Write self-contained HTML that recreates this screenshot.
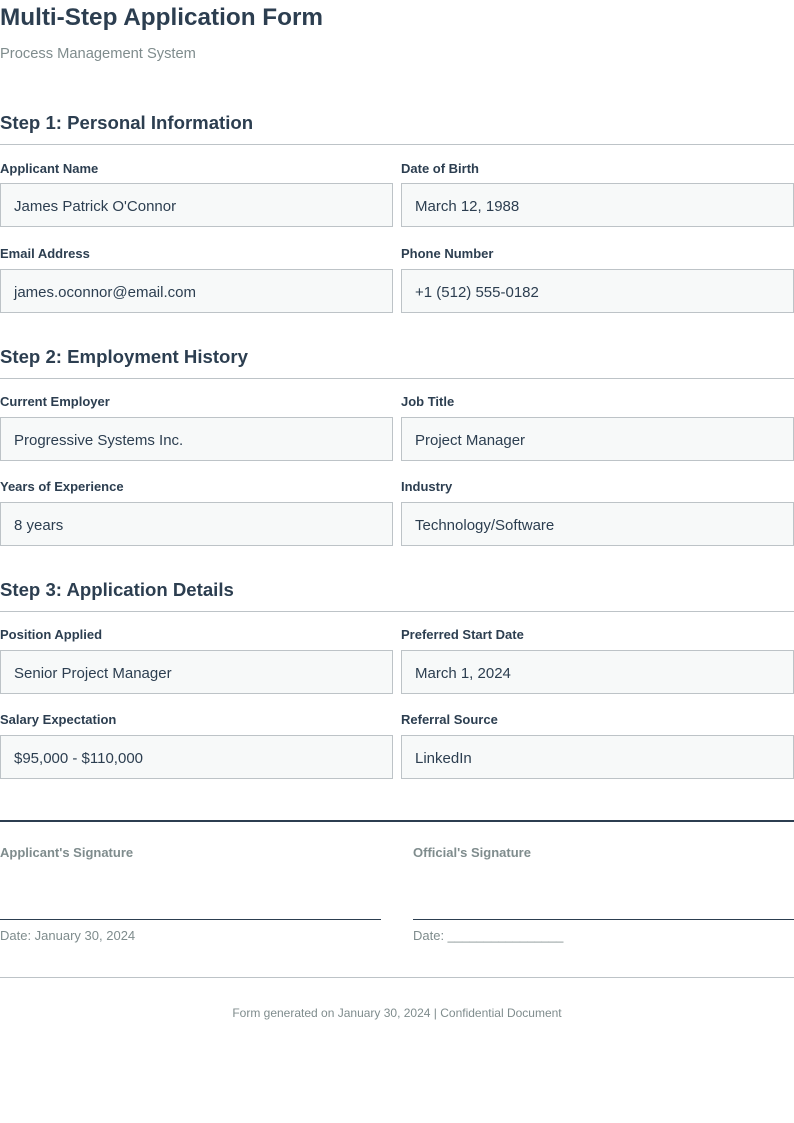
<!DOCTYPE html>
<html><head><meta charset="utf-8"><style>
*{margin:0;padding:0;box-sizing:border-box}
body{width:794px;height:1123px;background:#fff;font-family:"Liberation Sans",Arial,sans-serif;color:#2c3e50;position:relative;overflow:hidden}
.a{position:absolute;white-space:nowrap}
h1{font-size:24.3px;font-weight:bold;line-height:1}
.sub{font-size:14.7px;color:#7f8c8d}
h2{font-size:18.6px;font-weight:bold;line-height:1}
.hr{position:absolute;left:0;width:794px;height:1px;background:#bdc3c7}
.lb{font-size:13px;font-weight:bold;line-height:1}
.box{position:absolute;width:393px;height:44px;background:#f7f9f9;border:1px solid #bdc3c7;font-size:15px;padding-left:13px;line-height:45px}
.g{color:#7f8c8d}
</style></head><body>
<h1 class="a" style="left:0;top:6px">Multi-Step Application Form</h1>
<div class="a sub" style="left:0;top:46px">Process Management System</div>

<h2 class="a" style="left:0;top:114px">Step 1: Personal Information</h2>
<div class="hr" style="top:144px"></div>
<div class="a lb" style="left:0;top:162px">Applicant Name</div>
<div class="a lb" style="left:401px;top:162px">Date of Birth</div>
<div class="box" style="left:0;top:183px">James Patrick O'Connor</div>
<div class="box" style="left:401px;top:183px">March 12, 1988</div>
<div class="a lb" style="left:0;top:247px">Email Address</div>
<div class="a lb" style="left:401px;top:247px">Phone Number</div>
<div class="box" style="left:0;top:269px">james.oconnor@email.com</div>
<div class="box" style="left:401px;top:269px">+1 (512) 555-0182</div>

<h2 class="a" style="left:0;top:348px">Step 2: Employment History</h2>
<div class="hr" style="top:378px"></div>
<div class="a lb" style="left:0;top:395px">Current Employer</div>
<div class="a lb" style="left:401px;top:395px">Job Title</div>
<div class="box" style="left:0;top:417px">Progressive Systems Inc.</div>
<div class="box" style="left:401px;top:417px">Project Manager</div>
<div class="a lb" style="left:0;top:480px">Years of Experience</div>
<div class="a lb" style="left:401px;top:480px">Industry</div>
<div class="box" style="left:0;top:502px">8 years</div>
<div class="box" style="left:401px;top:502px">Technology/Software</div>

<h2 class="a" style="left:0;top:581px">Step 3: Application Details</h2>
<div class="hr" style="top:611px"></div>
<div class="a lb" style="left:0;top:628px">Position Applied</div>
<div class="a lb" style="left:401px;top:628px">Preferred Start Date</div>
<div class="box" style="left:0;top:650px">Senior Project Manager</div>
<div class="box" style="left:401px;top:650px">March 1, 2024</div>
<div class="a lb" style="left:0;top:713px">Salary Expectation</div>
<div class="a lb" style="left:401px;top:713px">Referral Source</div>
<div class="box" style="left:0;top:735px">$95,000 - $110,000</div>
<div class="box" style="left:401px;top:735px">LinkedIn</div>

<div class="hr" style="top:820px;height:2px;background:#2c3e50"></div>
<div class="a lb g" style="left:0;top:846px">Applicant's Signature</div>
<div class="a lb g" style="left:413px;top:846px">Official's Signature</div>
<div class="a" style="left:0;top:919px;width:381px;height:1px;background:#2c3e50"></div>
<div class="a" style="left:413px;top:919px;width:381px;height:1px;background:#2c3e50"></div>
<div class="a g" style="left:0;top:928px;font-size:13px">Date: January 30, 2024</div>
<div class="a g" style="left:413px;top:928px;font-size:13px">Date: ________________</div>
<div class="hr" style="top:977px"></div>
<div class="a g" style="left:0;width:794px;text-align:center;top:1006px;font-size:12px">Form generated on January 30, 2024 | Confidential Document</div>
</body></html>
